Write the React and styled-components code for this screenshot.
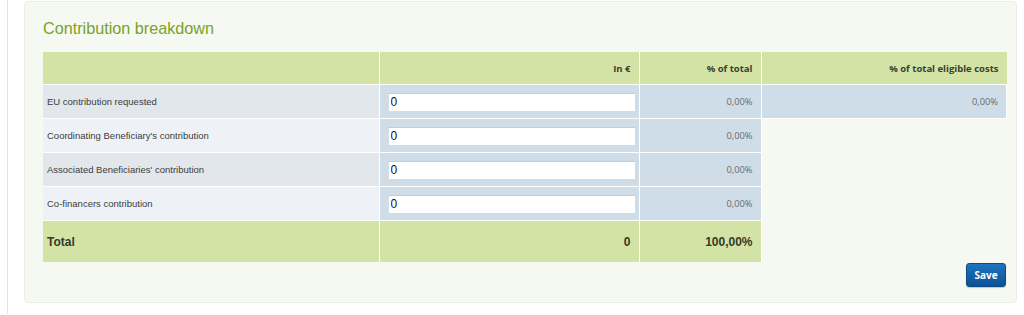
import React from 'react'
import styled, { createGlobalStyle } from 'styled-components'

const GlobalStyle = createGlobalStyle`
    html, body {
        margin: 0;
        padding: 0;
        background: #ffffff;
    }
    body {
        font-family: "Liberation Sans", Arial, sans-serif;
    }
`

const rows = [
    { label: 'EU contribution requested', value: '0', share: '0,00%', eligible: '0,00%' },
    { label: "Coordinating Beneficiary's contribution", value: '0', share: '0,00%' },
    { label: "Associated Beneficiaries' contribution", value: '0', share: '0,00%' },
    { label: 'Co-financers contribution', value: '0', share: '0,00%' },
]

const App = () => {
    return (
        <>
            <GlobalStyle />
            <Page>
                <Panel>
                    <Title>Contribution breakdown</Title>
                    <Table>
                        <colgroup>
                            <col style={{ width: '336px' }} />
                            <col style={{ width: '260px' }} />
                            <col style={{ width: '122px' }} />
                            <col />
                        </colgroup>
                        <thead>
                            <tr>
                                <HeadCell></HeadCell>
                                <HeadCell>In €</HeadCell>
                                <HeadCell>% of total</HeadCell>
                                <HeadCell>% of total eligible costs</HeadCell>
                            </tr>
                        </thead>
                        <tbody>
                            {rows.map((row, i) => (
                                <tr key={row.label}>
                                    <LabelCell $odd={i % 2 === 0}>{row.label}</LabelCell>
                                    <InputCell>
                                        <AmountInput defaultValue={row.value} />
                                    </InputCell>
                                    <ValueCell>{row.share}</ValueCell>
                                    {row.eligible ? <ValueCell>{row.eligible}</ValueCell> : <EmptyCell />}
                                </tr>
                            ))}
                            <tr>
                                <TotalCell>Total</TotalCell>
                                <TotalCell $right>0</TotalCell>
                                <TotalCell $right>100,00%</TotalCell>
                                <EmptyCell />
                            </tr>
                        </tbody>
                    </Table>
                    <Actions>
                        <SaveButton>Save</SaveButton>
                    </Actions>
                </Panel>
            </Page>
        </>
    )
}

export default App

const Page = styled.div({
    marginLeft: "7px",
    borderLeft: "1px solid #e4e4e4",
    padding: "1px 7px 0 16px",
    height: "314px",
    boxSizing: "border-box",
})

const Panel = styled.div({
    background: "#f6f8f2",
    border: "1px solid #ebeee6",
    borderRadius: "4px",
    padding: "15px 9px 15px 18px",
})

const Title = styled.h2({
    margin: "0 0 13px 0",
    fontFamily: '"Liberation Sans", Arial, sans-serif',
    fontWeight: "normal",
    fontSize: "16.2px",
    lineHeight: "22px",
    color: "#7aa229",
})

const Table = styled.table({
    width: "100%",
    tableLayout: "fixed",
    borderCollapse: "collapse",
})

const HeadCell = styled.th({
    background: "#d3e3a5",
    border: "1px solid #ffffff",
    borderTop: "none",
    borderLeft: "none",
    height: "32px",
    padding: "0 8px",
    textAlign: "right",
    fontFamily: '"Open Sans", sans-serif',
    fontWeight: "700",
    fontSize: "9.5px",
    color: "#3a3f33",
    "&:last-child": {
        borderRight: "none",
    },
})

const LabelCell = styled.td(({ $odd }) => ({
    background: $odd ? "#e2e7eb" : "#eef2f6",
    borderBottom: "1px solid #ffffff",
    borderRight: "1px solid #ffffff",
    height: "33px",
    padding: "0 4px",
    fontSize: "9.5px",
    color: "#3c3c3c",
}))

const InputCell = styled.td({
    background: "#cfdde9",
    borderBottom: "1px solid #ffffff",
    borderRight: "1px solid #ffffff",
    padding: "0 4px 0 8px",
})

const AmountInput = styled.input({
    display: "block",
    width: "100%",
    height: "18px",
    boxSizing: "border-box",
    border: "none",
    borderTop: "1px solid #c4ccd4",
    borderLeft: "1px solid #d6dde3",
    background: "#ffffff",
    padding: "0 2px",
    fontFamily: '"Liberation Sans", Arial, sans-serif',
    fontSize: "12px",
    color: "#111111",
    outline: "none",
})

const ValueCell = styled.td({
    background: "#cfdde9",
    borderBottom: "1px solid #ffffff",
    borderRight: "1px solid #ffffff",
    padding: "0 8px",
    textAlign: "right",
    fontFamily: '"Open Sans", sans-serif',
    fontSize: "9.3px",
    color: "#666c70",
})

const EmptyCell = styled.td({
    background: "transparent",
})

const TotalCell = styled.td(({ $right }) => ({
    background: "#d3e3a5",
    borderRight: "1px solid #ffffff",
    height: "41px",
    padding: $right ? "0 8px" : "0 4px",
    textAlign: $right ? "right" : "left",
    fontSize: "12px",
    fontWeight: "700",
    color: "#333a2a",
}))

const Actions = styled.div({
    display: "flex",
    justifyContent: "flex-end",
    paddingTop: "1px",
    paddingRight: "1px",
})

const SaveButton = styled.button({
    width: "40px",
    height: "24px",
    padding: "0",
    border: "1px solid #0c4a85",
    borderRadius: "3px",
    background: "linear-gradient(#1c74bf, #0d5196)",
    boxShadow: "0 1px 1px rgba(0,0,0,0.2)",
    color: "#ffffff",
    fontFamily: '"Open Sans", sans-serif',
    fontWeight: "700",
    fontSize: "10px",
    cursor: "pointer",
})
